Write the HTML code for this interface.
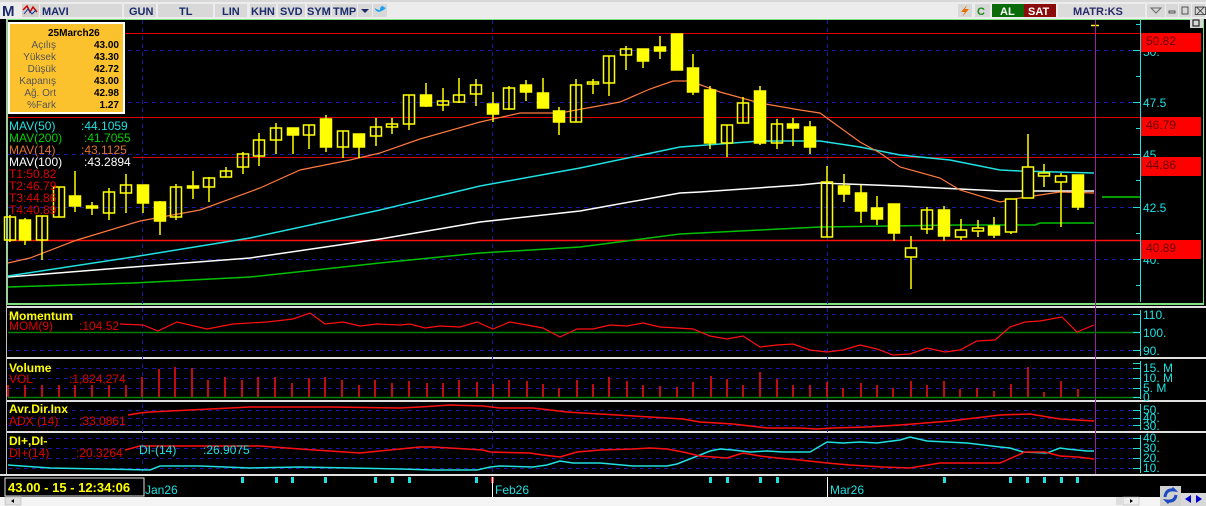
<!DOCTYPE html>
<html><head><meta charset="utf-8"><style>
html,body{margin:0;padding:0;background:#f0f0f0;}
body{width:1206px;height:506px;overflow:hidden;position:relative;font-family:"Liberation Sans",sans-serif;}
svg{position:absolute;left:0;top:0;}
.t{font-family:"Liberation Sans",sans-serif;font-size:12px;}
.b{font-family:"Liberation Sans",sans-serif;font-size:12px;font-weight:bold;}
.tb{font-family:"Liberation Sans",sans-serif;font-size:11px;font-weight:bold;}
</style></head><body>
<svg width="1206" height="506" viewBox="0 0 1206 506" xmlns="http://www.w3.org/2000/svg">
<rect x="0" y="0" width="1206" height="19" fill="#ececec"/>
<rect x="0" y="0" width="1206" height="2" fill="#d8d8d8"/>
<text x="2" y="16" font-family="Liberation Sans" font-weight="bold" font-size="15" fill="#1a2a6a">M</text>
<rect x="22" y="4" width="17" height="13" fill="#d4d0c8"/>
<path d="M23 10 L27 6 L30 12 L33 7 L37 12" stroke="#c00" fill="none" stroke-width="1.5"/>
<path d="M24 14 L28 9 L32 14 L36 10" stroke="#0033aa" fill="none" stroke-width="1"/>
<rect x="40" y="4" width="82" height="13" fill="#d8d8d8"/>
<text x="42" y="15" class="tb" font-size="12" fill="#1a2a6a">MAVI</text>
<rect x="124" y="4" width="32" height="13" fill="#d8d8d8"/><text x="129" y="15" class="tb" fill="#1a2a6a">GUN</text>
<rect x="158" y="4" width="55" height="13" fill="#d8d8d8"/><text x="179" y="15" class="tb" fill="#1a2a6a">TL</text>
<rect x="215" y="4" width="32" height="13" fill="#d8d8d8"/><text x="222" y="15" class="tb" fill="#1a2a6a">LIN</text>
<rect x="250" y="4" width="26" height="13" fill="#d8d8d8"/><text x="251" y="15" class="tb" fill="#1a2a6a">KHN</text>
<rect x="278" y="4" width="27" height="13" fill="#d8d8d8"/><text x="280" y="15" class="tb" fill="#1a2a6a">SVD</text>
<rect x="307" y="4" width="24" height="13" fill="#d8d8d8"/><text x="307" y="15" class="tb" fill="#1a2a6a">SYM</text>
<rect x="332" y="4" width="25" height="13" fill="#d8d8d8"/><text x="333" y="15" class="tb" fill="#1a2a6a">TMP</text>
<rect x="358" y="4" width="14" height="13" fill="#d8d8d8"/><path d="M361 9 L369 9 L365 13 Z" fill="#1a2a6a"/>
<rect x="373" y="4" width="14" height="13" fill="#d8d8d8"/><path d="M375 9 Q378 15 386 8 Q383 7 383 6 Q380 6 380 10 Q377 10 375 8 Z" fill="#1da1f2"/>
<rect x="958" y="4" width="14" height="13" fill="#d8d8d8"/><path d="M967 5 L961 12 L965 12 L962 17 L969 9 L965 9 Z" fill="#e07000"/>
<rect x="975" y="4" width="15" height="13" fill="#d8d8d8"/><text x="977" y="15" class="tb" font-size="12" fill="#1a8a1a">C</text>
<rect x="992" y="4" width="32" height="13" fill="#0b6b0b"/><text x="1000" y="15" class="tb" font-size="12" fill="#fff">AL</text>
<rect x="1024" y="4" width="32" height="13" fill="#8b0a0a"/><text x="1028" y="15" class="tb" font-size="12" fill="#fff">SAT</text>
<rect x="1058" y="4" width="87" height="13" fill="#dcdcdc"/><text x="1073" y="15" class="tb" font-size="12" fill="#2a2a6a">MATR:KS</text>
<rect x="1147" y="4" width="18" height="13" fill="#d8d8d8"/><path d="M1151 8 L1161 8 L1156 13 Z" fill="none" stroke="#666"/>
<rect x="1166" y="4" width="12" height="13" fill="#d8d8d8"/><rect x="1169" y="11" width="6" height="2" fill="none" stroke="#333" stroke-width="0.8"/>
<rect x="1179" y="4" width="12" height="13" fill="#d8d8d8"/><rect x="1182" y="7" width="6" height="7" fill="none" stroke="#333" stroke-width="0.8"/>
<rect x="1192" y="4" width="13" height="13" fill="#d8d8d8"/><text x="1194" y="15" font-size="11" fill="#333">⌧</text>

<rect x="0" y="19" width="1206" height="478" fill="#000"/>
<rect x="6" y="19" width="1" height="456" fill="#c0c0c0"/>
<rect x="7" y="19" width="1197" height="1" fill="#7fe07f"/>
<rect x="7" y="303" width="1197" height="2" fill="#7fe07f"/>
<rect x="1203" y="19" width="1" height="285" fill="#7fe07f"/>
<rect x="7" y="19" width="1" height="285" fill="#7fe07f"/>
<rect x="7" y="306" width="1199" height="2" fill="#e0e0e0"/>
<rect x="7" y="357" width="1199" height="2" fill="#e0e0e0"/>
<rect x="7" y="400" width="1199" height="2" fill="#e0e0e0"/>
<rect x="7" y="431" width="1199" height="2" fill="#e0e0e0"/>
<rect x="0" y="474" width="1206" height="2" fill="#e0e0e0"/>

<g stroke="#1a1aa0" stroke-dasharray="4,4" stroke-width="1">
<line x1="8" y1="50.5" x2="1140" y2="50.5"/><line x1="8" y1="102.5" x2="1140" y2="102.5"/>
<line x1="8" y1="154.5" x2="1140" y2="154.5"/><line x1="8" y1="207.5" x2="1140" y2="207.5"/>
<line x1="8" y1="259.5" x2="1140" y2="259.5"/>
<line x1="8" y1="314.5" x2="1140" y2="314.5"/><line x1="8" y1="350.5" x2="1140" y2="350.5"/>
<line x1="8" y1="368.5" x2="1140" y2="368.5"/><line x1="8" y1="378.5" x2="1140" y2="378.5"/><line x1="8" y1="388.5" x2="1140" y2="388.5"/>
<line x1="8" y1="410.5" x2="1140" y2="410.5"/><line x1="8" y1="418.5" x2="1140" y2="418.5"/><line x1="8" y1="425.5" x2="1140" y2="425.5"/>
<line x1="8" y1="438.5" x2="1140" y2="438.5"/><line x1="8" y1="448.5" x2="1140" y2="448.5"/><line x1="8" y1="458.5" x2="1140" y2="458.5"/><line x1="8" y1="468.5" x2="1140" y2="468.5"/>
<line x1="142.5" y1="20" x2="142.5" y2="474"/><line x1="492.5" y1="20" x2="492.5" y2="474"/><line x1="827.5" y1="20" x2="827.5" y2="474"/>
</g>
<g stroke="#e00000" stroke-width="1">
<line x1="8" y1="33.5" x2="1140" y2="33.5"/>
<line x1="8" y1="117.5" x2="1140" y2="117.5"/>
<line x1="133" y1="157.5" x2="1140" y2="157.5"/>
</g>
<line x1="8" y1="240.5" x2="1140" y2="240.5" stroke="#ff1010" stroke-width="1.5"/>

<polyline fill="none" stroke="#00c000" stroke-width="1.5" points="8,287 133,283 250,277 380,263 480,253 580,247 680,234 700,233 820,227 960,225 1035,225 1040,223 1094,223"/>
<polyline fill="none" stroke="#fff" stroke-width="1.5" points="8,277 133,267 250,258 380,239 480,222 580,211 680,193 700,192 800,185 820,183 900,186 960,189 1000,191 1094,191"/>
<polyline fill="none" stroke="#20e0e0" stroke-width="1.5" points="8,276 133,257 250,238 380,210 480,186 580,168 680,147 760,141 820,141 860,147 900,155 950,160 1000,170 1020,171 1094,173"/>
<polyline fill="none" stroke="#ff7a40" stroke-width="1.2" points="8,263 30,258 77,240 140,221 200,210 260,188 300,170 350,160 380,153 420,139 480,122 520,113 560,113 593,107 620,102 650,89 673,81 690,81 720,92 760,103 800,110 820,113 860,142 880,153 900,167 940,178 960,190 1000,202 1020,198 1060,192 1094,193"/>
<line x1="1102" y1="197" x2="1140" y2="197" stroke="#00d000" stroke-width="1.5"/>

<g stroke="#ffff00" stroke-width="1.5" fill="none">
<line x1="10" y1="215" x2="10" y2="242"/><rect x="4.5" y="217" width="11" height="23"/>
<line x1="25" y1="218" x2="25" y2="245"/><rect x="19.5" y="220" width="11" height="20" fill="#ff0"/>
<line x1="42" y1="216" x2="42" y2="260"/><rect x="36.5" y="216" width="11" height="24"/>
<line x1="59" y1="187" x2="59" y2="217"/><rect x="53.5" y="187" width="11" height="30"/>
<line x1="75" y1="171" x2="75" y2="212"/><rect x="69.5" y="196" width="11" height="10" fill="#ff0"/>
<line x1="92" y1="202" x2="92" y2="215"/><rect x="86.5" y="206" width="11" height="2" fill="#ff0"/>
<line x1="109" y1="188" x2="109" y2="220"/><rect x="103.5" y="192" width="11" height="21"/>
<line x1="126" y1="174" x2="126" y2="213"/><rect x="120.5" y="185" width="11" height="8"/>
<line x1="143" y1="185" x2="143" y2="213"/><rect x="137.5" y="185" width="11" height="18" fill="#ff0"/>
<line x1="160" y1="201" x2="160" y2="235"/><rect x="154.5" y="202" width="11" height="19" fill="#ff0"/>
<line x1="176" y1="184" x2="176" y2="220"/><rect x="170.5" y="187" width="11" height="30"/>
<line x1="193" y1="171" x2="193" y2="199"/><rect x="187.5" y="186" width="11" height="2" fill="#ff0"/>
<line x1="209" y1="177" x2="209" y2="202"/><rect x="203.5" y="178" width="11" height="9"/>
<line x1="226" y1="167" x2="226" y2="177"/><rect x="220.5" y="171" width="11" height="6"/>
<line x1="243" y1="152" x2="243" y2="174"/><rect x="237.5" y="154" width="11" height="13"/>
<line x1="259" y1="133" x2="259" y2="166"/><rect x="253.5" y="140" width="11" height="16"/>
<line x1="276" y1="123" x2="276" y2="154"/><rect x="270.5" y="128" width="11" height="12"/>
<line x1="293" y1="128" x2="293" y2="154"/><rect x="287.5" y="128" width="11" height="7" fill="#ff0"/>
<line x1="309" y1="125" x2="309" y2="149"/><rect x="303.5" y="125" width="11" height="10"/>
<line x1="326" y1="115" x2="326" y2="152"/><rect x="320.5" y="119" width="11" height="28" fill="#ff0"/>
<line x1="343" y1="131" x2="343" y2="158"/><rect x="337.5" y="131" width="11" height="16"/>
<line x1="359" y1="134" x2="359" y2="158"/><rect x="353.5" y="134" width="11" height="13" fill="#ff0"/>
<line x1="376" y1="118" x2="376" y2="146"/><rect x="370.5" y="127" width="11" height="9"/>
<line x1="392" y1="118" x2="392" y2="134"/><rect x="386.5" y="124" width="11" height="3"/>
<line x1="409" y1="95" x2="409" y2="130"/><rect x="403.5" y="95" width="11" height="29"/>
<line x1="426" y1="83" x2="426" y2="107"/><rect x="420.5" y="95" width="11" height="11" fill="#ff0"/>
<line x1="443" y1="88" x2="443" y2="111"/><rect x="437.5" y="101" width="11" height="4"/>
<line x1="459" y1="78" x2="459" y2="103"/><rect x="453.5" y="95" width="11" height="7"/>
<line x1="476" y1="79" x2="476" y2="106"/><rect x="470.5" y="85" width="11" height="9"/>
<line x1="493" y1="92" x2="493" y2="122"/><rect x="487.5" y="104" width="11" height="10" fill="#ff0"/>
<line x1="509" y1="86" x2="509" y2="110"/><rect x="503.5" y="88" width="11" height="21"/>
<line x1="526" y1="80" x2="526" y2="101"/><rect x="520.5" y="85" width="11" height="7" fill="#ff0"/>
<line x1="543" y1="78" x2="543" y2="108"/><rect x="537.5" y="93" width="11" height="15" fill="#ff0"/>
<line x1="559" y1="107" x2="559" y2="135"/><rect x="553.5" y="111" width="11" height="11" fill="#ff0"/>
<line x1="576" y1="79" x2="576" y2="122"/><rect x="570.5" y="85" width="11" height="37"/>
<line x1="593" y1="79" x2="593" y2="94"/><rect x="587.5" y="82" width="11" height="2"/>
<line x1="609" y1="56" x2="609" y2="96"/><rect x="603.5" y="56" width="11" height="27"/>
<line x1="626" y1="46" x2="626" y2="70"/><rect x="620.5" y="49" width="11" height="6"/>
<line x1="643" y1="49" x2="643" y2="68"/><rect x="637.5" y="49" width="11" height="12" fill="#ff0"/>
<line x1="660" y1="36" x2="660" y2="59"/><rect x="654.5" y="47" width="11" height="4" fill="#ff0"/>
<line x1="677" y1="34" x2="677" y2="70"/><rect x="671.5" y="34" width="11" height="36" fill="#ff0"/>
<line x1="693" y1="54" x2="693" y2="95"/><rect x="687.5" y="68" width="11" height="24" fill="#ff0"/>
<line x1="710" y1="86" x2="710" y2="149"/><rect x="704.5" y="90" width="11" height="53" fill="#ff0"/>
<line x1="727" y1="125" x2="727" y2="157"/><rect x="721.5" y="125" width="11" height="18"/>
<line x1="743" y1="97" x2="743" y2="123"/><rect x="737.5" y="103" width="11" height="20"/>
<line x1="760" y1="86" x2="760" y2="145"/><rect x="754.5" y="91" width="11" height="52" fill="#ff0"/>
<line x1="777" y1="119" x2="777" y2="149"/><rect x="771.5" y="124" width="11" height="19"/>
<line x1="793" y1="118" x2="793" y2="146"/><rect x="787.5" y="124" width="11" height="4" fill="#ff0"/>
<line x1="810" y1="121" x2="810" y2="154"/><rect x="804.5" y="127" width="11" height="20" fill="#ff0"/>
<line x1="827" y1="166" x2="827" y2="237"/><rect x="821.5" y="182" width="11" height="55"/>
<line x1="844" y1="174" x2="844" y2="202"/><rect x="838.5" y="186" width="11" height="8" fill="#ff0"/>
<line x1="861" y1="185" x2="861" y2="223"/><rect x="855.5" y="193" width="11" height="18" fill="#ff0"/>
<line x1="877" y1="196" x2="877" y2="225"/><rect x="871.5" y="208" width="11" height="11" fill="#ff0"/>
<line x1="894" y1="204" x2="894" y2="241"/><rect x="888.5" y="204" width="11" height="29" fill="#ff0"/>
<line x1="911" y1="236" x2="911" y2="289"/><rect x="905.5" y="248" width="11" height="9" fill="#000"/>
<line x1="927" y1="207" x2="927" y2="234"/><rect x="921.5" y="210" width="11" height="19"/>
<line x1="944" y1="206" x2="944" y2="241"/><rect x="938.5" y="210" width="11" height="26" fill="#ff0"/>
<line x1="961" y1="219" x2="961" y2="240"/><rect x="955.5" y="230" width="11" height="7" fill="#000"/>
<line x1="978" y1="220" x2="978" y2="237"/><rect x="972.5" y="228" width="11" height="3" fill="#000"/>
<line x1="994" y1="217" x2="994" y2="238"/><rect x="988.5" y="226" width="11" height="9" fill="#ff0"/>
<line x1="1011" y1="199" x2="1011" y2="234"/><rect x="1005.5" y="199" width="11" height="33" fill="#000"/>
<line x1="1028" y1="134" x2="1028" y2="198"/><rect x="1022.5" y="167" width="11" height="31" fill="#000"/>
<line x1="1044" y1="164" x2="1044" y2="187"/><rect x="1038.5" y="173" width="11" height="3" fill="#000"/>
<line x1="1061" y1="173" x2="1061" y2="227"/><rect x="1055.5" y="176" width="11" height="6" fill="#000"/>
<line x1="1078" y1="175" x2="1078" y2="210"/><rect x="1072.5" y="175" width="11" height="32" fill="#ff0"/>
<line x1="1091" y1="25.5" x2="1099" y2="25.5"/>
</g>
<line x1="1095.5" y1="20" x2="1095.5" y2="474" stroke="#a020a0" stroke-width="1"/>

<line x1="1140.5" y1="20" x2="1140.5" y2="302" stroke="#20e0e0"/>
<g stroke="#20e0e0">
<line x1="1133" y1="50.5" x2="1140" y2="50.5"/><line x1="1133" y1="102.5" x2="1140" y2="102.5"/><line x1="1133" y1="154.5" x2="1140" y2="154.5"/><line x1="1133" y1="207.5" x2="1140" y2="207.5"/><line x1="1133" y1="259.5" x2="1140" y2="259.5"/>
<line x1="1136" y1="24.5" x2="1140" y2="24.5"/><line x1="1136" y1="76.5" x2="1140" y2="76.5"/><line x1="1136" y1="128.5" x2="1140" y2="128.5"/><line x1="1136" y1="180.5" x2="1140" y2="180.5"/><line x1="1136" y1="233.5" x2="1140" y2="233.5"/><line x1="1136" y1="285.5" x2="1140" y2="285.5"/>
</g>
<g class="t" fill="#20e0e0" font-size="12">
<text x="1143" y="56">50.</text><text x="1143" y="107">47.5</text><text x="1143" y="159">45.</text><text x="1143" y="212">42.5</text><text x="1143" y="264">40.</text>
</g>
<g fill="#ff0000"><rect x="1141" y="33" width="60" height="19"/><rect x="1141" y="117" width="60" height="19"/><rect x="1141" y="157" width="60" height="19"/><rect x="1141" y="240" width="60" height="19"/></g>
<g class="t" fill="#600" font-size="12"><text x="1146" y="45">50.82</text><text x="1146" y="129">46.79</text><text x="1146" y="169">44.86</text><text x="1146" y="252">40.89</text></g>
<rect x="1190" y="19" width="13" height="9" fill="#d8d8d8"/><rect x="1193" y="20" width="6" height="6" fill="none" stroke="#000"/>

<rect x="8" y="22" width="117" height="92" fill="#fff"/>
<rect x="10" y="24" width="113" height="88" fill="#fbc22e"/>
<text x="48" y="36" font-family="Liberation Sans" font-weight="bold" fill="#000" font-size="10">25March26</text>
<g font-family="Liberation Sans" font-size="10" fill="#555" text-anchor="end">
<text x="56" y="48">Açılış</text><text x="56" y="60">Yüksek</text><text x="56" y="72">Düşük</text><text x="56" y="84">Kapanış</text><text x="56" y="96">Ağ. Ort</text><text x="56" y="108">%Fark</text>
</g>
<g font-family="Liberation Sans" font-size="10" font-weight="bold" fill="#000" text-anchor="end">
<text x="119" y="48">43.00</text><text x="119" y="60">43.30</text><text x="119" y="72">42.72</text><text x="119" y="84">43.00</text><text x="119" y="96">42.98</text><text x="119" y="108">1.27</text>
</g>
<g class="t">
<text x="9" y="130" fill="#20e0e0">MAV(50)</text><text x="81" y="130" fill="#20e0e0">:44.1059</text>
<text x="9" y="142" fill="#00d000">MAV(200)</text><text x="84" y="142" fill="#00d000">:41.7055</text>
<text x="9" y="154" fill="#e07030">MAV(14)</text><text x="81" y="154" fill="#e07030">:43.1125</text>
<text x="9" y="166" fill="#fff">MAV(100)</text><text x="84" y="166" fill="#fff">:43.2894</text>
<text x="9" y="178" fill="#e00000">T1:50.82</text><text x="9" y="190" fill="#e00000">T2:46.79</text>
<text x="9" y="202" fill="#e00000">T3:44.86</text><text x="9" y="214" fill="#e00000">T4:40.89</text>
</g>

<line x1="8" y1="332.5" x2="1140" y2="332.5" stroke="#008000" stroke-width="1.5"/>
<polyline fill="none" stroke="#ff1010" stroke-width="1.2" points="120,324 143,325 158,331 177,322 207,329 233,324 267,322 293,319 310,313 325,324 343,322 360,326 377,324 400,325 410,324 425,328 440,326 460,327 477,322 493,329 510,322 527,325 543,328 560,337 577,329 593,329 610,325 627,326 643,323 660,327 677,328 693,329 710,336 727,339 743,336 760,347 777,345 793,344 810,350 827,352 843,350 860,345 877,349 893,355 910,354 927,348 945,352 960,350 977,341 995,340 1010,327 1025,322 1040,321 1062,317 1077,332 1094,325"/>
<text x="9" y="320" class="b" fill="#ffff00">Momentum</text>
<text x="9" y="330" class="t" fill="#e00000">MOM(9)</text><text x="79" y="330" class="t" fill="#e00000">:104.52</text>
<line x1="1140.5" y1="310" x2="1140.5" y2="356" stroke="#20e0e0"/>
<g stroke="#20e0e0"><line x1="1133" y1="314.5" x2="1140" y2="314.5"/><line x1="1133" y1="332.5" x2="1140" y2="332.5"/><line x1="1133" y1="350.5" x2="1140" y2="350.5"/></g>
<g class="t" fill="#20e0e0" font-size="12"><text x="1143" y="319">110.</text><text x="1143" y="337">100.</text><text x="1143" y="355">90.</text></g>

<line x1="8" y1="397.5" x2="1140" y2="397.5" stroke="#008000" stroke-width="1.5"/>
<g stroke="#ff1010" stroke-width="1.5">
<line x1="8" y1="385" x2="8" y2="397"/><line x1="25" y1="385" x2="25" y2="397"/><line x1="42" y1="385" x2="42" y2="397"/><line x1="59" y1="385" x2="59" y2="397"/><line x1="75" y1="385" x2="75" y2="397"/><line x1="92" y1="385" x2="92" y2="397"/><line x1="109" y1="385" x2="109" y2="397"/><line x1="126" y1="385" x2="126" y2="397"/>
<line x1="142" y1="377" x2="142" y2="397"/><line x1="159" y1="369" x2="159" y2="397"/><line x1="175" y1="367" x2="175" y2="397"/><line x1="192" y1="368" x2="192" y2="397"/><line x1="208" y1="380" x2="208" y2="397"/><line x1="225" y1="377" x2="225" y2="397"/><line x1="242" y1="380" x2="242" y2="397"/><line x1="258" y1="377" x2="258" y2="397"/><line x1="275" y1="377" x2="275" y2="397"/><line x1="292" y1="383" x2="292" y2="397"/><line x1="309" y1="378" x2="309" y2="397"/><line x1="325" y1="377" x2="325" y2="397"/><line x1="342" y1="380" x2="342" y2="397"/><line x1="359" y1="385" x2="359" y2="397"/><line x1="375" y1="380" x2="375" y2="397"/><line x1="392" y1="383" x2="392" y2="397"/>
<line x1="409" y1="381" x2="409" y2="397"/><line x1="427" y1="383" x2="427" y2="397"/><line x1="443" y1="383" x2="443" y2="397"/><line x1="459" y1="380" x2="459" y2="397"/><line x1="477" y1="382" x2="477" y2="397"/><line x1="493" y1="384" x2="493" y2="397"/><line x1="509" y1="380" x2="509" y2="397"/><line x1="527" y1="381" x2="527" y2="397"/><line x1="543" y1="384" x2="543" y2="397"/><line x1="559" y1="388" x2="559" y2="397"/><line x1="577" y1="380" x2="577" y2="397"/><line x1="593" y1="384" x2="593" y2="397"/><line x1="609" y1="377" x2="609" y2="397"/><line x1="627" y1="381" x2="627" y2="397"/><line x1="643" y1="385" x2="643" y2="397"/><line x1="660" y1="386" x2="660" y2="397"/><line x1="677" y1="387" x2="677" y2="397"/><line x1="693" y1="382" x2="693" y2="397"/><line x1="711" y1="376" x2="711" y2="397"/><line x1="727" y1="379" x2="727" y2="397"/><line x1="743" y1="385" x2="743" y2="397"/><line x1="760" y1="372" x2="760" y2="397"/><line x1="777" y1="379" x2="777" y2="397"/><line x1="793" y1="385" x2="793" y2="397"/><line x1="810" y1="385" x2="810" y2="397"/><line x1="827" y1="382" x2="827" y2="397"/><line x1="843" y1="388" x2="843" y2="397"/><line x1="861" y1="383" x2="861" y2="397"/><line x1="877" y1="385" x2="877" y2="397"/><line x1="893" y1="388" x2="893" y2="397"/>
<line x1="911" y1="381" x2="911" y2="397"/><line x1="927" y1="385" x2="927" y2="397"/><line x1="944" y1="381" x2="944" y2="397"/><line x1="960" y1="389" x2="960" y2="397"/><line x1="977" y1="388" x2="977" y2="397"/><line x1="994" y1="391" x2="994" y2="397"/><line x1="1011" y1="384" x2="1011" y2="397"/><line x1="1028" y1="367" x2="1028" y2="397"/><line x1="1044" y1="392" x2="1044" y2="397"/><line x1="1061" y1="381" x2="1061" y2="397"/><line x1="1078" y1="389" x2="1078" y2="397"/>
</g>
<text x="9" y="372" class="b" fill="#ffff00">Volume</text>
<text x="9" y="383" class="t" fill="#e00000">VOL</text><text x="69" y="383" class="t" fill="#e00000">:1,824,274</text>
<line x1="1140.5" y1="361" x2="1140.5" y2="399" stroke="#20e0e0"/>
<g stroke="#20e0e0"><line x1="1133" y1="363.5" x2="1140" y2="363.5"/><line x1="1133" y1="368.5" x2="1140" y2="368.5"/><line x1="1133" y1="378.5" x2="1140" y2="378.5"/><line x1="1133" y1="388.5" x2="1140" y2="388.5"/><line x1="1133" y1="397.5" x2="1140" y2="397.5"/></g>
<g class="t" fill="#20e0e0" font-size="11"><text x="1143" y="372">15. M</text><text x="1143" y="382">10. M</text><text x="1143" y="392">5. M</text><text x="1143" y="401">0</text></g>

<polyline fill="none" stroke="#ff1010" stroke-width="1.5" points="128,415 140,413 150,412 250,407 330,407 400,408 420,407 450,405 483,406 500,408 533,408 550,410 567,412 583,413 600,414 650,417 683,419 700,422 717,423 733,424 750,426 767,428 800,428 817,429 833,428 867,427 900,425 950,421 1000,415 1030,414 1060,419 1094,421"/>
<text x="9" y="413" class="b" fill="#ffff00">Avr.Dir.Inx</text>
<text x="9" y="425" class="t" fill="#e00000">ADX (14)</text><text x="79" y="425" class="t" fill="#e00000">:33.0861</text>
<line x1="1140.5" y1="404" x2="1140.5" y2="430" stroke="#20e0e0"/>
<g stroke="#20e0e0"><line x1="1133" y1="410.5" x2="1140" y2="410.5"/><line x1="1133" y1="418.5" x2="1140" y2="418.5"/><line x1="1133" y1="425.5" x2="1140" y2="425.5"/></g>
<g class="t" fill="#20e0e0" font-size="11"><text x="1143" y="414">50.</text><text x="1143" y="422">40.</text><text x="1143" y="430">30.</text></g>

<polyline fill="none" stroke="#20e0e0" stroke-width="1.5" points="8,465 50,468 150,470 160,466 200,466 250,468 300,467 400,469 433,470 477,470 490,467 500,466 533,467 547,465 560,461 573,463 600,463 633,466 667,466 677,464 700,455 710,451 720,449 733,450 750,452 767,451 783,452 810,452 827,442 843,443 860,442 877,443 900,440 910,437 927,441 967,443 1000,447 1010,448 1023,452 1047,453 1060,448 1067,449 1087,451 1094,451"/>
<polyline fill="none" stroke="#ff1010" stroke-width="1.5" points="125,450 140,446 260,446 300,449 360,453 400,449 420,447 433,447 450,448 483,450 490,452 530,453 543,455 560,457 577,452 600,450 633,449 650,448 667,449 683,452 700,456 727,458 743,453 760,456 777,458 800,460 827,463 850,465 883,467 910,468 940,463 1000,463 1025,452 1045,452 1060,456 1078,457 1094,459"/>
<text x="9" y="445" class="b" fill="#ffff00">DI+,DI-</text>
<text x="9" y="457" class="t" fill="#e00000">DI+(14)</text><text x="76" y="457" class="t" fill="#e00000">:20.3264</text>
<text x="139" y="454" class="t" fill="#20e0e0">DI-(14)</text><text x="203" y="454" class="t" fill="#20e0e0">:26.9075</text>
<line x1="1140.5" y1="435" x2="1140.5" y2="473" stroke="#20e0e0"/>
<g stroke="#20e0e0"><line x1="1133" y1="438.5" x2="1140" y2="438.5"/><line x1="1133" y1="448.5" x2="1140" y2="448.5"/><line x1="1133" y1="458.5" x2="1140" y2="458.5"/><line x1="1133" y1="468.5" x2="1140" y2="468.5"/></g>
<g class="t" fill="#20e0e0" font-size="11"><text x="1143" y="442">40.</text><text x="1143" y="452">30.</text><text x="1143" y="462">20.</text><text x="1143" y="472">10.</text></g>

<g fill="#20e0e0">
<rect x="241" y="477" width="3" height="6"/><rect x="275" y="477" width="3" height="6"/><rect x="291" y="477" width="3" height="6"/><rect x="324" y="477" width="3" height="6"/><rect x="374" y="477" width="3" height="6"/><rect x="391" y="477" width="3" height="6"/>
<rect x="408" y="477" width="3" height="6"/><rect x="475" y="477" width="3" height="6"/><rect x="709" y="477" width="3" height="6"/><rect x="726" y="477" width="3" height="6"/><rect x="759" y="477" width="3" height="6"/><rect x="776" y="477" width="3" height="6"/>
<rect x="943" y="477" width="3" height="6"/><rect x="1009" y="477" width="3" height="6"/><rect x="1026" y="477" width="3" height="6"/><rect x="1043" y="477" width="3" height="6"/><rect x="1060" y="477" width="3" height="6"/><rect x="1076" y="477" width="3" height="6"/>
</g>
<rect x="491" y="477" width="3" height="6" fill="#ff2020"/>
<line x1="492.5" y1="477" x2="492.5" y2="497" stroke="#fff"/>
<line x1="827.5" y1="477" x2="827.5" y2="497" stroke="#fff"/>
<g class="t" fill="#20e0e0" font-size="12"><text x="145" y="494">Jan26</text><text x="495" y="494">Feb26</text><text x="830" y="494">Mar26</text></g>
<rect x="5" y="478" width="139" height="18" fill="#000" stroke="#e0e0e0" stroke-width="1"/>
<text x="8" y="492" font-family="Liberation Sans" font-weight="bold" font-size="13" fill="#ffff00">43.00 - 15 - 12:34:06</text>

<rect x="0" y="497" width="1160" height="9" fill="#f4f4f4"/>
<rect x="5" y="497" width="16" height="8" fill="#e0e0e0" stroke="#aaa" stroke-width="0.5"/><path d="M14 499 L11 501 L14 503 Z" fill="#000"/>
<rect x="1116" y="497" width="6" height="8" fill="#ddd"/>
<rect x="1123" y="497" width="16" height="8" fill="#eee" stroke="#aaa" stroke-width="0.5"/><path d="M1130 499 L1133 501 L1130 503 Z" fill="#000"/>
<rect x="1160" y="486" width="21" height="20" fill="#d0d0d0"/>
<path d="M1165 497 Q1166 489 1174 490 L1172 488 M1176 495 Q1175 502 1167 501 L1169 503" stroke="#1a4ac0" stroke-width="3" fill="none"/>
<rect x="1181" y="493" width="25" height="13" fill="#d8d8d8"/>
<path d="M1191 495 L1185 499 L1191 503 Z" fill="#0000d0"/><path d="M1196 495 L1202 499 L1196 503 Z" fill="#0000d0"/>
</svg>
</body></html>
